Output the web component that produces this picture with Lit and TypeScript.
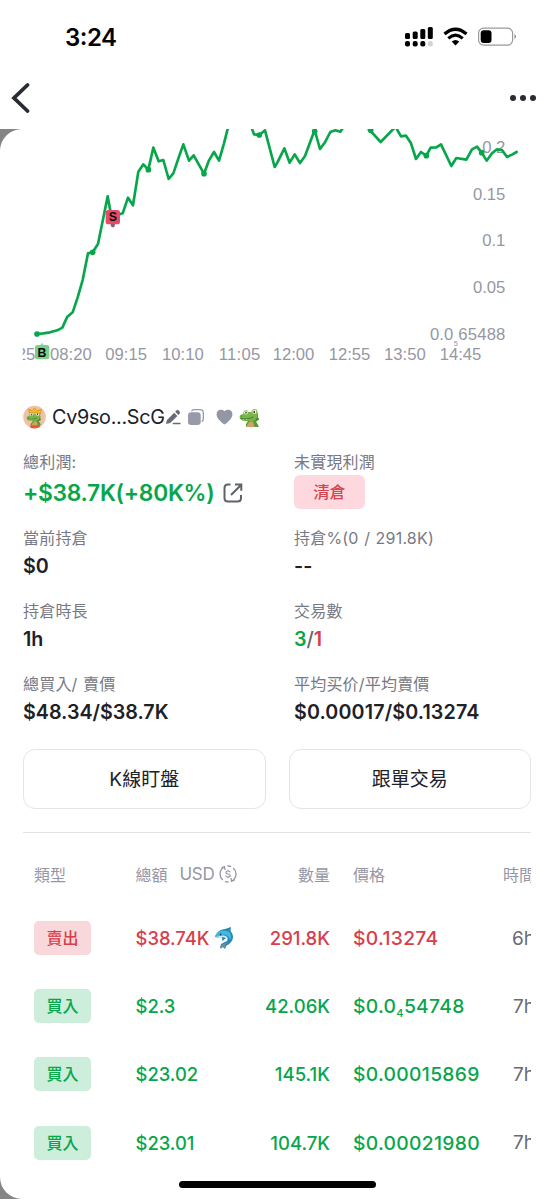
import { LitElement, html, svg, css } from "lit";
import { customElement, property } from "lit/decorators.js";

type Side = "sell" | "buy";
interface Trade { side: Side; total: string; whale?: boolean; qty: string; price: string; sub?: string; rest?: string; time: string; }

const TRADES: Trade[] = [
  { side: "sell", total: "$38.74K", whale: true, qty: "291.8K", price: "$0.13274", time: "6h" },
  { side: "buy", total: "$2.3", qty: "42.06K", price: "$0.0", sub: "4", rest: "54748", time: "7h" },
  { side: "buy", total: "$23.02", qty: "145.1K", price: "$0.00015869", time: "7h" },
  { side: "buy", total: "$23.01", qty: "104.7K", price: "$0.00021980", time: "7h" },
];

// Price series in thirds of a pixel, origin at the chart's top left.
const SERIES = [
  "111,615 130,613 150,610 172,604 187,596 202,563 218,550 233,505 248,453 264,373 278,370 294,345 308,276 323,202 334,262 338,268 352,258 368,253 384,206 399,229 415,128 430,106 445,122 460,56 476,97 490,93 506,150 520,133 537,83 550,46 567,95 581,79 612,134 627,94 642,69 657,95 672,43 686,-12",
  "752,-12 762,16 778,18 795,4 824,114 832,101 853,58 869,101 884,76 900,102 915,81 944,3 960,60 976,38 991,9 1006,4 1021,8 1034,-10",
  "1098,-10 1110,4 1142,39 1182,-2",
  "1186,-10 1192,3 1203,22 1218,20 1233,43 1248,90 1263,69 1279,80 1292,56 1309,55 1323,46 1354,111 1369,87 1399,92 1416,61 1431,53 1445,71 1460,95 1476,73 1491,61 1506,63 1521,84 1536,77 1550,69",
];
const DOTS = [[111, 615], [278, 370], [445, 122], [612, 134], [778, 18], [944, 7], [1112, 4], [1279, 80], [1445, 71]];
const Y_AXIS: [string, number][] = [["0.2", 71], ["0.15", 212], ["0.1", 352], ["0.05", 493]];
const X_AXIS: [string, number][] = [["08:20", 150], ["09:15", 316], ["10:10", 486], ["11:05", 656], ["12:00", 818], ["12:55", 986], ["13:50", 1152], ["14:45", 1319]];

const croc = svg`
  <path d="M11 9L18 10L18.500 13Q17.500 14 17.300 15L19.500 18.500V20H7V17Q9 15 9 12Z" fill="#5a9a38"/>
  <path d="M7 20L10.500 14.500H14L15.500 20Z" fill="#d5a264"/>
  <path d="M16 13.500Q20.500 14.200 20 11.500L18.800 10.500Q20 8.500 18.500 6L15.500 8Z" fill="#4c8b30"/>
  <path d="M4.500 7C3.500 2.500 8.500 1.500 9.500 5H12.500C12.500 .8 18.800 1 18.500 5.500C19.500 9.500 17.500 13.500 13 14H7C3 14 .6 12.500 .6 10C.6 8 2.500 7 4.500 7Z" fill="#78b54a"/>
  <path d="M1.600 11.200Q7 13.200 14.500 10" fill="none" stroke="#3d7628" stroke-width=".9"/>
  <path d="M3.500 12L4 13L4.800 12.200M7 12.300L7.600 13.300L8.300 12.200" fill="#fff"/>
  <ellipse cx="7" cy="5.400" rx="1.800" ry="2" fill="#fbfbe0"/><ellipse cx="15.400" cy="4.900" rx="2" ry="2.100" fill="#fbfbe0"/>
  <ellipse cx="7" cy="5.600" rx=".7" ry="1.200" fill="#27371d"/><ellipse cx="15.200" cy="5.100" rx=".8" ry="1.300" fill="#27371d"/>
  <circle cx="2.600" cy="9" r=".5" fill="#2b5822"/>`;

@customElement("price-chart")
class PriceChart extends LitElement {
  static styles = css`
    :host { display: block; height: 236px; }
    svg { display: block; width: 554px; height: 236px; overflow: hidden; }
    .axis { font-family: "Liberation Sans", Arial, sans-serif; font-size: 50px; fill: #9697a3; }
    .tiny { font-size: 22px; }
    .line { fill: none; stroke: #08a64b; stroke-width: 8; stroke-linejoin: round; stroke-linecap: round; }
    .dot { fill: #08a64b; }
    .mark { font-family: "Liberation Sans", Arial, sans-serif; font-weight: 700; font-size: 37px; fill: #080b08; }
  `;
  render() {
    return html`<svg viewBox="0 0 1662 708">
      <defs><clipPath id="left"><rect x="68" y="0" width="1594" height="708"/></clipPath></defs>
      ${Y_AXIS.map(([t, y]) => svg`<text class="axis" x="1516" y=${y} text-anchor="end">${t}</text>`)}
      <text class="axis" x="1290" y="633" textLength="70">0.0</text>
      <text class="axis tiny" x="1361" y="650">5</text>
      <text class="axis" x="1375" y="633" textLength="141">65488</text>
      <text class="axis" clip-path="url(#left)" x="50" y="692">25</text>
      ${X_AXIS.map(([t, x]) => svg`<text class="axis" x=${x} y="692" textLength="125">${t}</text>`)}
      ${SERIES.map((p) => svg`<polyline class="line" points=${p}/>`)}
      ${DOTS.map(([x, y]) => svg`<circle class="dot" cx=${x} cy=${y} r="8.5"/>`)}
      <path d="M331 284h15l-3 9q-5 4-9 0z" fill="#7b6670"/>
      <rect x="317" y="243" width="43" height="43" rx="8" fill="#e9496b"/>
      <text class="mark" x="338.500" y="277" text-anchor="middle">S</text>
      <path d="M118 652l8-11 8 11z" fill="#96d9a3"/>
      <rect x="105" y="648" width="43" height="43" rx="8" fill="#7bcf8b"/>
      <text class="mark" x="126" y="683" text-anchor="middle">B</text>
    </svg>`;
  }
}

@customElement("stat-cell")
class StatCell extends LitElement {
  @property() label = "";
  static styles = css`
    :host { display: block; }
    .label { height: 24px; line-height: 24px; font-size: 16px; letter-spacing: .2px; word-spacing: .8px; color: #777984; white-space: nowrap; }
    .value { height: 32px; display: flex; align-items: center; font-size: 19.700px; font-weight: 600; color: #202128; white-space: nowrap; }
  `;
  render() {
    return html`<div class="label">${this.label}</div><div class="value"><slot></slot></div>`;
  }
}

@customElement("app-root")
class AppRoot extends LitElement {
  static styles = css`
    :host { display: block; position: relative; width: 554px; height: 1200px; overflow: hidden; background: #fff;
      font-family: Inter, "Noto Sans CJK TC", sans-serif; color: #202128; }
    * { box-sizing: border-box; }
    svg { display: block; flex: none; }
    .status { height: 74px; padding: 0 37px 0 65px; display: flex; align-items: center; }
    .clock { flex: 1; font-size: 24px; font-weight: 600; letter-spacing: -.5px; color: #050505; }
    .clock span { position: relative; top: -1px; }
    .nav { height: 55px; padding: 0 18px 0 11px; display: flex; justify-content: space-between; align-items: center; }
    .nav svg { margin-top: -7px; }
    .nav .back { margin-top: -9px; }
    .backdrop { height: 1070px; background: linear-gradient(90deg, #858585 0 30px, #fff 30px); }
    .sheet { height: 1070px; background: #fff; border-radius: 22px 0 0 22px; }
    .content { padding: 0 23px; margin-top: 37px; }
    .wallet { height: 30px; display: flex; align-items: center; font-size: 20px; }
    .addr { width: 112px; margin-left: 6px; font-size: 19.800px; letter-spacing: -.3px; white-space: nowrap; }
    .pen { margin-left: 2px; } .copy { margin-left: 7px; } .heart { margin-left: 12px; } .croc { margin-left: 6px; }
    .stats { margin-top: 18px; display: grid; grid-template-columns: 271px 1fr; grid-template-rows: 76px 73px 73px 77px; }
    .profit { display: flex; align-items: center; gap: 9px; height: 36px; margin-top: 5px; font-size: 22.800px; letter-spacing: -.3px; font-weight: 600; color: #08a64b; }
    .closed { margin-top: 4px; width: 71px; height: 34px; padding-bottom: 2px; display: grid; place-items: center; border-radius: 6px; background: #fed8df; color: #d64550; font-size: 16px; font-weight: 500; }
    .avg { letter-spacing: .13px; }
    .up { color: #08a64b; } .slash { color: #62646e; font-weight: 500; } .down { color: #d83e49; }
    .buttons { display: grid; grid-template-columns: 1fr 1fr; gap: 23px; padding-bottom: 23px; border-bottom: 1.500px solid #e1e2e6; }
    .btn { height: 60px; padding: 0 0 4px; border: 1.500px solid #e5e5e8; border-radius: 12px; background: #fff; font: 400 19px Inter, "Noto Sans CJK TC", sans-serif; color: #202128; }
    .table { overflow: hidden; padding-left: 11px; }
    .row { display: grid; grid-template-columns: 102px 110px 84px 136px 69px; height: 68.200px; align-items: center; width: 501px; font-size: 19px; font-weight: 500; white-space: nowrap; }
    .head { height: 71px; padding-top: 10px; font-size: 16px; font-weight: 400; color: #9697a5; }
    .total { display: flex; align-items: center; gap: 4px; font-size: 18.400px; margin-left: -.5px; }
    .head .total { font-size: 16px; gap: 5px; }
    .usd { font-size: 17px; letter-spacing: -.3px; margin-left: 7px; }
    .qty { text-align: right; font-size: 18.500px; } .time { text-align: right; font-weight: 400; color: #686a74; }
    .price { padding-left: 23px; font-size: 19.300px; letter-spacing: .3px; }
    .head .price { font-size: 16px; letter-spacing: 0; }
    .head .qty { font-size: 16px; } .head .time { color: #9697a5; }
    .sell { color: #d83e49; } .buy { color: #08a64b; }
    .tag { width: 57px; height: 34px; padding-bottom: 2px; display: grid; place-items: center; border-radius: 5px; font-size: 16px; }
    .sell .tag { background: #f8d8da; } .buy .tag { background: #cceedb; }
    .sub { font-size: 11px; position: relative; top: 4px; }
    .home { position: absolute; left: 179px; top: 1181px; width: 197px; height: 7px; border-radius: 4px; background: #000; }
  `;

  private row(t: Trade) {
    return html`<div class="row ${t.side}">
      <span class="tag">${t.side === "sell" ? "賣出" : "買入"}</span>
      <span class="total">${t.total}${t.whale ? html`<svg width="22" height="24" viewBox="0 0 22 24">
        <path d="M2 11C3 7 7 3 12 3L18 1L17.500 5C22 10 20.500 16 13 20L12 23L10 21L7 22L8 18L14 15C16 12 13 9 9 10L7 12Z" fill="#2689b8"/>
        <path d="M2 11C4 5 9 3.500 14 5C18 6 19 11 17 14C16 8 9 8 6 10Z" fill="#42b8df"/>
        <path d="M2 11L7 10C10 8.500 14 10 15 13C12 11 9 12 6 12Z" fill="#c7e9ef"/>
        <path d="M9 11L9.500 15L13 12Z" fill="#1685b2"/>
        <path d="M8 19L7.500 23L10 21L13 22L12 19L15 16Z" fill="#718d9b"/>
        <circle cx="7.500" cy="8.200" r=".8" fill="#15384a"/>
      </svg>` : ""}</span>
      <span class="qty">${t.qty}</span>
      <span class="price">${t.price}${t.sub ? html`<span class="sub">${t.sub}</span>${t.rest}` : ""}</span>
      <span class="time">${t.time}</span>
    </div>`;
  }

  render() {
    return html`
      <div class="status">
        <div class="clock">3<span>:</span>24</div>
        <svg width="112" height="22" viewBox="0 0 112 22">
          <g><rect x="0" y="7" width="5" height="6" rx="1.500"/><rect x="7.700" y="5.500" width="5" height="7.500" rx="1.500"/><rect x="15.300" y="3" width="5" height="10" rx="1.500"/><rect x="22.800" y="1" width="5" height="12" rx="1.500"/>
          <rect x="0" y="15" width="5" height="5.500" rx="2"/><rect x="7.700" y="15" width="5" height="5.500" rx="2"/><rect x="15.300" y="15" width="5" height="5.500" rx="2"/><rect x="22.800" y="15" width="5" height="5.500" rx="2" fill="#d4d4d4"/></g>
          <g fill="none" stroke="#000" stroke-width="3.200"><path d="M39.500 8Q50.500-1.500 61.500 8"/><path d="M43.300 12.400Q50.500 6 57.700 12.400"/></g>
          <path d="M46.700 15.500Q50.500 12.500 54.300 15.500L50.500 19.500Z"/>
          <rect x="73.600" y="2.100" width="34" height="17" rx="5" fill="none" stroke="#999" stroke-width="1.200"/><rect x="75.700" y="4.200" width="10.800" height="12.800" rx="3"/><path d="M109.500 8Q112.500 10.500 109.500 13.200Z" fill="#888"/>
        </svg>
      </div>
      <div class="nav">
        <svg class="back" width="20" height="32" viewBox="0 0 20 32"><path d="M16.500 4L3 17L16.500 30" fill="none" stroke="#292b32" stroke-width="3.800" stroke-linecap="round"/></svg>
        <svg width="26" height="8" viewBox="0 0 26 8" fill="#292b35"><circle cx="3" cy="4" r="3"/><circle cx="13" cy="4" r="3"/><circle cx="23" cy="4" r="3"/></svg>
      </div>
      <div class="backdrop"><div class="sheet">
        <price-chart></price-chart>
        <div class="content">
          <div class="wallet">
            <svg width="23" height="24" viewBox="0 0 23 24"><circle cx="11.500" cy="12" r="11.300" fill="#efc2a7"/><path d="M7 22.500L8 18H16.500L17 22Q12 24.500 7 22.500Z" fill="#e55a36"/><g transform="translate(3.200 5.500) scale(.74)">${croc}</g><path d="M6.500 8L5.500 4L9 5.500L11.500 3L14 5.500L18.500 4.500L17.500 9Q11.500 6.500 6.500 8Z" fill="#f6b91b" stroke="#c27a1c" stroke-width=".5"/></svg>
            <span class="addr">Cv9so...ScG</span>
            <svg class="pen" width="15" height="16" viewBox="0 0 15 16" fill="#686b75"><path d="M0 15L1 11L8.200 3.700L11.400 6.900L4.200 14.100Z"/><path d="M9.200 2.700L10.700 1.200Q11.500.5 12.300 1.300L13.800 2.800Q14.500 3.500 13.800 4.300L12.400 5.900Z"/><path d="M6.800 14.500H14.500" stroke="#686b75" stroke-width="1.500"/></svg>
            <svg class="copy" width="16" height="17" viewBox="0 0 16 17"><path d="M3.500 2.300Q4.200.7 6 .7H12Q15.300.7 15.300 4V10Q15.300 12 13.700 12.700" fill="none" stroke="#979aa9" stroke-width="1.300"/><rect y="3.300" width="12.700" height="12.700" rx="3.200" fill="#979aa9"/></svg>
            <svg class="heart" width="17" height="16" viewBox="0 0 17 16"><path d="M8.500 15.500Q6.500 14.600 3.200 11C-3 4 3-2 8.500 2.200C14-2 20 4 13.800 11Q10.500 14.600 8.500 15.500Z" fill="#9296a5"/></svg>
            <svg class="croc" width="21" height="21" viewBox="0 0 21 21">${croc}</svg>
          </div>
          <div class="stats">
            <stat-cell label="總利潤:"><span class="profit">+$38.7K(+80K%)<svg width="20" height="20" viewBox="0 0 20 20" fill="none" stroke="#5f626b" stroke-width="2"><path d="M7.500 1.500H5Q1.500 1.500 1.500 5V15Q1.500 18.500 5 18.500H14.500Q18 18.500 18 15V12"/><path d="M8 12L18 2M12 1.500H18.300V7.700"/></svg></span></stat-cell>
            <stat-cell label="未實現利潤"><span class="closed">清倉</span></stat-cell>
            <stat-cell label="當前持倉">$0</stat-cell>
            <stat-cell label="持倉%(0 / 291.8K)">--</stat-cell>
            <stat-cell label="持倉時長">1h</stat-cell>
            <stat-cell label="交易數"><span class="up">3</span><span class="slash">/</span><span class="down">1</span></stat-cell>
            <stat-cell label="總買入/ 賣價">$48.34/$38.7K</stat-cell>
            <stat-cell label="平均买价/平均賣價"><span class="avg">$0.00017/$0.13274</span></stat-cell>
          </div>
          <div class="buttons"><button class="btn">K線盯盤</button><button class="btn">跟單交易</button></div>
          <div class="table">
            <div class="row head"><span>類型</span><span class="total">總額<span class="usd">USD</span><svg width="18" height="18" viewBox="0 0 18 18" fill="none" stroke="#9697a5" stroke-width="1.300"><path d="M5.500 1.800A8 8 0 0 0 3.800 15M2.300 3.200L5.500 1.800L6 5M12.500 16.200A8 8 0 0 0 14.200 3M15.700 14.800L12.500 16.200L12 13M8.500 1A8 8 0 0 1 12 1.600M6 16.400A8 8 0 0 0 9.500 17"/><path d="M11.200 7.300Q11 6 9 6Q6.900 6 6.900 7.500Q6.900 8.800 9 9Q11.200 9.200 11.200 10.600Q11.200 12 9 12Q7 12 6.700 10.700M9 4.800V6M9 12V13.200" stroke-width="1.200"/></svg></span><span class="qty">數量</span><span class="price">價格</span><span class="time">時間</span></div>
            ${TRADES.map((t) => this.row(t))}
          </div>
        </div>
      </div></div>
      <div class="home"></div>`;
  }
}
